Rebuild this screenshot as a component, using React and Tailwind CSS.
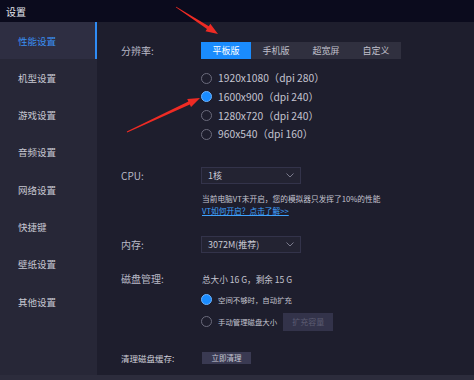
import React from 'react';

const navItems = ['性能设置', '机型设置', '游戏设置', '音频设置', '网络设置', '快捷键', '壁纸设置', '其他设置'];
const tabs = ['平板版', '手机版', '超宽屏', '自定义'];
const resolutions = ['1920x1080（dpi 280）', '1600x900（dpi 240）', '1280x720（dpi 240）', '960x540（dpi 160）'];

const font = { fontFamily: '"Noto Sans CJK SC", "Noto Sans", sans-serif' };

// tapered red annotation arrow
const arrowPoints = (x1, y1, x2, y2) => {
  const dx = x2 - x1;
  const dy = y2 - y1;
  const len = Math.hypot(dx, dy);
  const ux = dx / len;
  const uy = dy / len;
  const nx = -uy;
  const ny = ux;
  const headLen = 12;
  const bx = x2 - ux * headLen;
  const by = y2 - uy * headLen;
  const p = (x, y) => `${x.toFixed(1)},${y.toFixed(1)}`;
  return [
    p(x1 + nx * 0.4, y1 + ny * 0.4),
    p(bx + nx * 1.6, by + ny * 1.6),
    p(bx + nx * 4.5, by + ny * 4.5),
    p(x2, y2),
    p(bx - nx * 4.5, by - ny * 4.5),
    p(bx - nx * 1.6, by - ny * 1.6),
    p(x1 - nx * 0.4, y1 - ny * 0.4),
  ].join(' ');
};

const Radio = ({ checked, label, small }) => (
  <div className="flex items-center h-full">
    {checked ? (
      <span className="w-[11px] h-[11px] rounded-full bg-[#1a8cff] border border-[#6db4ff] shrink-0"></span>
    ) : (
      <span className="w-[11px] h-[11px] rounded-full border border-[#6b6b7c] shrink-0"></span>
    )}
    <span className={`ml-[6px] text-[#c4c4d0] whitespace-nowrap ${small ? 'text-[7.4px]' : 'text-[10.3px]'}`}>{label}</span>
  </div>
);

const Select = ({ value }) => (
  <div className="w-[100px] h-[17px] bg-[#232332] border border-[#33334a] flex items-center justify-between px-[6px]">
    <span className="text-[9px] text-[#c8c8d2]">{value}</span>
    <svg width="8" height="5" viewBox="0 0 8 5" fill="none">
      <path d="M0.5 0.5 L4 4 L7.5 0.5" stroke="#7a7a8c" strokeWidth="1" />
    </svg>
  </div>
);

const Row = ({ label, children, className = '' }) => (
  <div className={`flex ${className}`}>
    <div className="w-[80px] shrink-0 text-[10px] text-[#b9b9c6] flex items-center">{label}</div>
    <div className="flex-1">{children}</div>
  </div>
);

const App = () => {
  return (
    <div className="relative w-[474px] h-[380px] overflow-hidden bg-[#1e1e2d]" style={font}>
      {/* Title bar */}
      <div className="h-[22px] bg-[#0b0b1d] flex items-center pl-[6px]">
        <span className="text-[10px] text-[#e4e4ec]">设置</span>
      </div>

      <div className="flex h-[353px]">
        {/* Sidebar */}
        <div className="w-[97px] bg-[#272737] flex flex-col">
          {navItems.map((item, i) => (
            <div
              key={item}
              className={`h-[37.3px] flex items-center pl-[18px] text-[9.5px] ${
                i === 0 ? 'bg-[#2e2e42] text-[#3a8ff0] border-r-2 border-[#2f8cf5]' : 'text-[#c8c8d2]'
              }`}
            >
              {item}
            </div>
          ))}
        </div>

        {/* Main */}
        <div className="flex-1 pl-[24px] flex flex-col">
          <Row label="分辨率:" className="mt-[20px] h-[17px]">
            <div className="flex w-[200px] h-[17px] bg-[#30303f]">
              {tabs.map((t, i) => (
                <div
                  key={t}
                  className={`w-[50px] flex items-center justify-center text-[9px] ${
                    i === 0 ? 'bg-[#1a8cfe] text-white' : 'text-[#c0c0cc]'
                  }`}
                >
                  {t}
                </div>
              ))}
            </div>
          </Row>

          <div className="ml-[80px] mt-[9.7px] flex flex-col">
            {resolutions.map((r, i) => (
              <div key={r} className="h-[18.7px]">
                <Radio checked={i === 1} label={r} />
              </div>
            ))}
          </div>

          <Row label="CPU:" className="mt-[23.5px] h-[17px]">
            <Select value="1核" />
          </Row>

          <div className="ml-[81px] mt-[9px] text-[7.7px] leading-[12px]">
            <div className="text-[#c4c4d0] whitespace-nowrap">当前电脑VT未开启，您的模拟器只发挥了10%的性能</div>
            <div className="text-[#3ea2ff] underline">VT如何开启？点击了解&gt;&gt;</div>
          </div>

          <Row label="内存:" className="mt-[19px] h-[17px]">
            <Select value="3072M(推荐)" />
          </Row>

          <Row label="磁盘管理:" className="mt-[20px] h-[12px]">
            <div className="pl-[1px] text-[8.6px] leading-[12px] text-[#c4c4d0]">总大小 16 G，剩余 15 G</div>
          </Row>

          <div className="ml-[80px] mt-[6px] h-[18px]">
            <Radio checked small label="空间不够时，自动扩充" />
          </div>
          <div className="ml-[80px] mt-[4px] h-[18px] flex items-center">
            <Radio small label="手动管理磁盘大小" />
            <div className="ml-[6px] w-[50px] h-[18px] bg-[#33334a] flex items-center justify-center text-[8px] text-[#5c5c72]">
              扩充容量
            </div>
          </div>

          <div className="mt-[21px] h-[12px] flex items-center">
            <div className="w-[80px] text-[8.5px] leading-[12px] text-[#d0d0da]">清理磁盘缓存:</div>
            <div className="ml-[1px] w-[49px] h-[12px] bg-[#3a3a52] flex items-center justify-center text-[7.5px] leading-[12px] text-[#c8c8d4]">
              立即清理
            </div>
          </div>
        </div>
      </div>

      <div className="h-[5px] bg-[#2c2c3c]"></div>

      {/* Annotation arrows */}
      <svg className="absolute inset-0 pointer-events-none" width="474" height="380">
        <polygon points={arrowPoints(176, 7, 218, 34)} fill="#ee2b24" />
        <polygon points={arrowPoints(127, 132, 200, 98)} fill="#ee2b24" />
      </svg>
    </div>
  );
};

export default App;
